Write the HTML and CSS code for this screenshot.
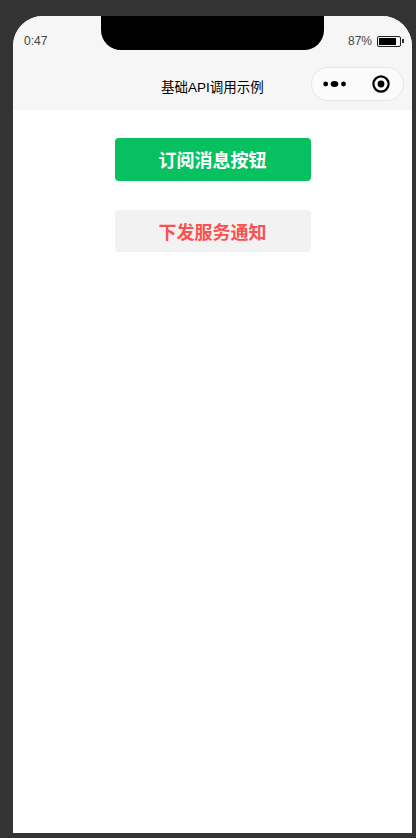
FILE: index.html
```html
<!DOCTYPE html>
<html lang="zh-CN">
  <head>
    <meta charset="UTF-8" />
    <meta name="viewport" content="width=device-width, initial-scale=1.0" />
    <title>基础API调用示例</title>
    <link rel="stylesheet" href="styles.css">
  </head>
  <body>
    <div class="phone">
      <div class="notch"></div>
      <div class="status-bar">
        <span class="time">0:47</span>
        <div class="battery-wrap">
          <span class="percent">87%</span>
          <div class="battery"><div class="battery-level"></div></div>
          <div class="battery-tip"></div>
        </div>
      </div>
      <div class="nav-bar">
        <div class="nav-title">基础API调用示例</div>
        <div class="capsule">
          <svg class="more-icon" width="24" height="8" viewBox="0 0 24 8">
            <circle cx="2.7" cy="4" r="2.4" fill="#000" />
            <ellipse cx="11.5" cy="4" rx="3.8" ry="3" fill="#000" />
            <circle cx="20.5" cy="4" r="2.4" fill="#000" />
          </svg>
          <svg class="record-icon" width="18" height="18" viewBox="0 0 18 18">
            <circle cx="9" cy="9" r="7.6" fill="none" stroke="#000" stroke-width="2.2" />
            <circle cx="9" cy="9" r="3.4" fill="#000" />
          </svg>
        </div>
      </div>
      <div class="content">
        <button class="btn btn-primary">订阅消息按钮</button>
        <button class="btn btn-default">下发服务通知</button>
      </div>
    </div>
  </body>
</html>
```

FILE: styles.css
```css
html,
body {
  height: 100%;
}
body {
  margin: 0;
  padding: 16px 4px 5px 13px;
  box-sizing: border-box;
  background: #333333;
  font-family: "Liberation Sans", "Noto Sans CJK SC", sans-serif;
  overflow: hidden;
}
.phone {
  position: relative;
  height: 100%;
  background: #ffffff;
  border-radius: 30px 30px 0 0;
  overflow: hidden;
  display: flex;
  flex-direction: column;
}
.notch {
  position: absolute;
  top: 0;
  left: 87.5px;
  width: 223.5px;
  height: 34px;
  background: #000000;
  border-radius: 0 0 20px 20px;
}
.status-bar {
  height: 46px;
  padding: 0 3px 0 11px;
  display: flex;
  justify-content: space-between;
  align-items: center;
  background: #f6f6f6;
  border-bottom: 1px solid #f8f8f8;
  box-sizing: border-box;
  font-size: 12px;
  color: #444444;
}
.time {
  margin-top: 4px;
}
.battery-wrap {
  margin-top: 5px;
  margin-right: 5px;
  display: flex;
  align-items: center;
}
.percent {
  margin-right: 5px;
}
.battery {
  width: 24px;
  height: 11px;
  padding: 1px;
  border: 1px solid #222222;
  border-radius: 2px;
  box-sizing: border-box;
}
.battery-level {
  width: 87%;
  height: 100%;
  background: #000000;
}
.battery-tip {
  width: 2px;
  height: 4px;
  margin-left: 1px;
  background: #333333;
}
.nav-bar {
  height: 48px;
  padding-right: 8px;
  display: flex;
  justify-content: flex-end;
  align-items: center;
  background: #f6f6f6;
  position: relative;
}
.nav-title {
  position: absolute;
  left: 0;
  right: 0;
  top: 18px;
  text-align: center;
  font-size: 13.5px;
  line-height: 16px;
  color: #000000;
}
.capsule {
  position: relative;
  width: 93px;
  height: 34px;
  margin-top: -4px;
  padding: 0 13px 0 11px;
  display: flex;
  justify-content: space-between;
  align-items: center;
  background: #fbfbfb;
  border: 1px solid #e6e6e6;
  border-radius: 17px;
  box-sizing: border-box;
}
.content {
  flex: 1;
  padding-top: 28px;
  display: flex;
  flex-direction: column;
  align-items: center;
  gap: 29px;
}
.btn {
  width: 196px;
  height: 42.5px;
  padding: 0;
  border: none;
  border-radius: 4px;
  font-family: inherit;
  font-size: 18px;
  font-weight: bold;
}
.btn-primary {
  background: #07c160;
  color: #ffffff;
}
.btn-default {
  background: #f2f2f2;
  color: #fa5151;
}
```
